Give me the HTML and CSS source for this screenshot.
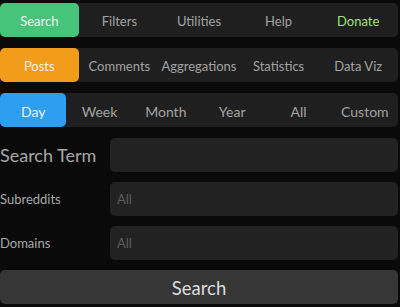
FILE: index.html
```html
<!DOCTYPE html>
<html>
<head>
    <title>Search</title>
    <link rel="stylesheet" href="styles.css">
</head>
<body>
    <div class="container">
        <div class="tabs five">
            <div class="tab active green">Search</div>
            <div class="tab">Filters</div>
            <div class="tab">Utilities</div>
            <div class="tab">Help</div>
            <div class="tab donate">Donate</div>
        </div>
        <div class="tabs five">
            <div class="tab active orange">Posts</div>
            <div class="tab">Comments</div>
            <div class="tab">Aggregations</div>
            <div class="tab">Statistics</div>
            <div class="tab">Data Viz</div>
        </div>
        <div class="tabs six">
            <div class="tab active blue">Day</div>
            <div class="tab">Week</div>
            <div class="tab">Month</div>
            <div class="tab">Year</div>
            <div class="tab">All</div>
            <div class="tab">Custom</div>
        </div>

        <div class="field first">
            <label class="big" for="term">Search Term</label>
            <input type="text" id="term">
        </div>
        <div class="field">
            <label for="subs">Subreddits</label>
            <input type="text" id="subs" placeholder="All">
        </div>
        <div class="field">
            <label for="domains">Domains</label>
            <input type="text" id="domains" placeholder="All">
        </div>
        <button class="submit">Search</button>
    </div>
</body>
</html>
```

FILE: styles.css
```css
body {
    margin: 0;
    background-color: #0a0a0a;
    font-family: Lato, "Liberation Sans", sans-serif;
}
.container {
    width: 398px;
    padding-top: 3px;
}
.tabs {
    display: grid;
    height: 34px;
    margin-bottom: 11px;
    background-color: #1f1f1f;
    border-radius: 5px;
}
.tabs.five {
    grid-template-columns: repeat(5, 1fr);
}
.tabs.six {
    grid-template-columns: repeat(6, 1fr);
}
.tab {
    display: flex;
    align-items: center;
    justify-content: center;
    padding-top: 1px;
    font-size: 13px;
    color: #a3a3a3;
    border-radius: 5px;
}
.tabs.six .tab {
    font-size: 14px;
    padding-top: 2px;
}
.tabs.five .tab.active {
    margin-right: 1px;
}
.tab.active { color: #f0f0f0; }
.green { background-color: #46c57a; }
.orange { background-color: #f29c1c; }
.blue { background-color: #2d9ff0; }
.donate { color: #9fe07a; }
.field {
    display: flex;
    align-items: center;
    height: 34px;
    margin-bottom: 10px;
}
.field label {
    width: 110px;
    flex-shrink: 0;
    font-size: 13px;
    color: #a8a8a8;
}
.field label.big {
    font-size: 18px;
}
.field input {
    flex: 1;
    height: 34px;
    box-sizing: border-box;
    margin: 0;
    padding: 0 7px;
    border: none;
    border-radius: 5px;
    background-color: #222222;
    color: #ddd;
    font-family: Lato, "Liberation Sans", sans-serif;
    font-size: 13px;
    outline: none;
}
.field input::placeholder {
    color: #5c5c5c;
}
.submit {
    display: block;
    width: 100%;
    height: 34px;
    border: none;
    border-radius: 5px;
    background-color: #363636;
    color: #dcdcdc;
    font-family: Lato, "Liberation Sans", sans-serif;
    font-size: 18.5px;
    padding: 1px 0 0;
}
```
